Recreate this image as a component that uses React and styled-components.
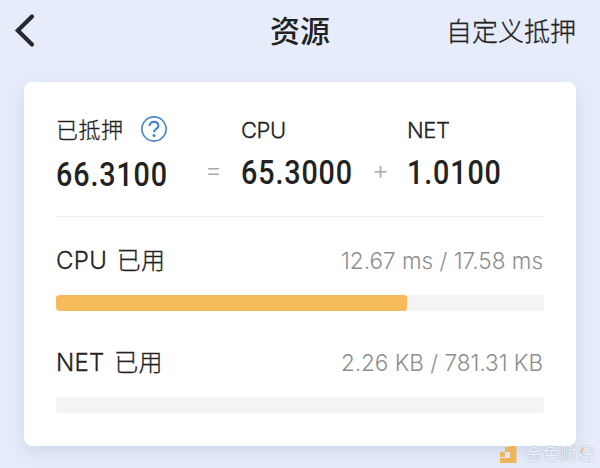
import React from "react"
import styled, { createGlobalStyle } from "styled-components"

const GlobalStyle = createGlobalStyle`
  * {
    box-sizing: border-box;
  }
  body {
    margin: 0;
    background-color: #e6ecf9;
    color: #222;
    font-family: Inter, "Noto Sans CJK SC", sans-serif;
  }
`

const Screen = styled.div`
  position: relative;
  height: 468px;
  padding: 0 24px;
  overflow: hidden;
`

const Header = styled.header`
  display: grid;
  grid-template-columns: 1fr auto 1fr;
  align-items: center;
  height: 82px;
  padding-bottom: 20px;
`

const BackButton = styled.button`
  display: flex;
  width: 24px;
  margin-left: -11px;
  padding: 0;
  border: 0;
  background: none;
`

const Title = styled.h1`
  margin: 0;
  font-size: 30px;
  font-weight: 500;
  line-height: 40px;
`

const HeaderLink = styled.span`
  justify-self: end;
  padding-top: 1px;
  font-size: 26px;
  font-weight: 300;
  line-height: 40px;
  -webkit-text-stroke: 0.3px #222;
`

const Card = styled.main`
  height: 364px;
  padding: 32px;
  border-radius: 8px;
  background-color: white;
  box-shadow: 0 6px 16px rgba(110, 140, 190, 0.2);
`

const Summary = styled.section`
  display: grid;
  grid-template-columns: 150px 35px 132px 34px 1fr;
  height: 103px;
  border-bottom: 1px solid #ececec;
`

const Label = styled.div`
  display: flex;
  align-items: center;
  height: ${props => (props.$latin ? 31 : 30)}px;
  font-size: 22px;
  font-weight: 300;
  letter-spacing: ${props => (props.$latin ? "-0.4px" : "0.5px")};
  -webkit-text-stroke: 0.3px #222;

  svg {
    margin-left: 17px;
  }
`

const LabelText = styled.span`
  margin-top: -2px;
`

const Amount = styled.div`
  width: max-content;
  margin-top: ${props => props.$top || 11}px;
  font-family: Roboto, sans-serif;
  font-size: 33px;
  font-weight: 500;
  line-height: 34px;
  letter-spacing: 1px;
  transform: scaleX(0.87);
  transform-origin: left;
`

const Sign = styled.div`
  margin-left: -1px;
  padding-top: 39px;
  color: #aaa;
  font-size: 26px;
  font-weight: 300;
  line-height: 34px;
`

const Usage = styled.section`
  height: 102px;
  padding-top: 27px;
`

const UsageRow = styled.div`
  display: flex;
  justify-content: space-between;
  height: 34px;
  line-height: 34px;
`

const UsageName = styled.span`
  font-size: 24px;
  font-weight: 300;
  letter-spacing: 0.3px;
  word-spacing: 2.5px;
  -webkit-text-stroke: 0.3px #222;
`

const UsageValue = styled.span`
  padding-right: 1px;
  color: #8e8e8e;
  font-size: 22.5px;
  font-weight: 350;
  line-height: 33px;
`

const Track = styled.div`
  height: 16px;
  margin-top: 17px;
  border-radius: 3px;
  background-color: #f4f4f4;
  overflow: hidden;
`

const Fill = styled.div`
  height: 100%;
  border-radius: 3px;
  background-color: #f6bc5c;
`

const Watermark = styled.div`
  position: absolute;
  left: 499px;
  top: 443px;
  display: flex;
  align-items: center;
  gap: 8px;
  height: 22px;
  color: #edf1f9;
  font-size: 17.5px;
  line-height: 22px;
  text-shadow: 0 0 1px #8492ad;
`

const Accent = styled.svg`
  margin: -7px 0 0 -23px;
`

const HelpIcon = () => (
  <svg width="26" height="26" viewBox="0 0 26 26" fill="none" stroke="#4387c7">
    <circle cx="13" cy="13" r="12.1" strokeWidth="1.6" />
    <path d="M8.6 10c0-2.6 1.8-4.1 4.4-4.1s4.4 1.5 4.4 3.8c0 3.1-4.4 3.3-4.4 6.6" strokeWidth="2.1" />
    <circle cx="13" cy="19.5" r="1.5" fill="#4387c7" stroke="none" />
  </svg>
)

const UsageItem = ({ name, value, percent }) => (
  <Usage>
    <UsageRow>
      <UsageName>{name}</UsageName>
      <UsageValue>{value}</UsageValue>
    </UsageRow>
    <Track>
      <Fill style={{ width: `${percent}%` }} />
    </Track>
  </Usage>
)

export default () => {
  return (
    <Screen>
      <GlobalStyle />
      <Header>
        <BackButton aria-label="返回">
          <svg width="24" height="36" viewBox="0 0 24 36" fill="none">
            <path d="M19 3.5 4.8 17.5 19 31.5" stroke="#272a2d" strokeWidth="4.2" strokeLinecap="round" />
          </svg>
        </BackButton>
        <Title>资源</Title>
        <HeaderLink>自定义抵押</HeaderLink>
      </Header>
      <Card>
        <Summary>
          <div>
            <Label>
              <LabelText>已抵押</LabelText>
              <HelpIcon />
            </Label>
            <Amount $top={14}>66.3100</Amount>
          </div>
          <Sign>=</Sign>
          <div>
            <Label $latin>CPU</Label>
            <Amount>65.3000</Amount>
          </div>
          <Sign>+</Sign>
          <div>
            <Label $latin>NET</Label>
            <Amount>1.0100</Amount>
          </div>
        </Summary>
        <UsageItem name="CPU 已用" value="12.67 ms / 17.58 ms" percent={72} />
        <UsageItem name="NET 已用" value="2.26 KB / 781.31 KB" percent={0} />
      </Card>
      <Watermark>
        <svg width="18" height="22" viewBox="0 0 18 22" fill="#edb65c">
          <path d="M11 3h6.5v17H1v-5h10z" />
          <path d="M1 9h5v5H1zM6 4h5v5H6z" />
        </svg>
        <span>金色财经</span>
        <Accent width="4" height="8" viewBox="0 0 4 8">
          <path d="M3.4.6.8 6" stroke="#edb65c" strokeWidth="1.4" />
        </Accent>
      </Watermark>
    </Screen>
  )
}
